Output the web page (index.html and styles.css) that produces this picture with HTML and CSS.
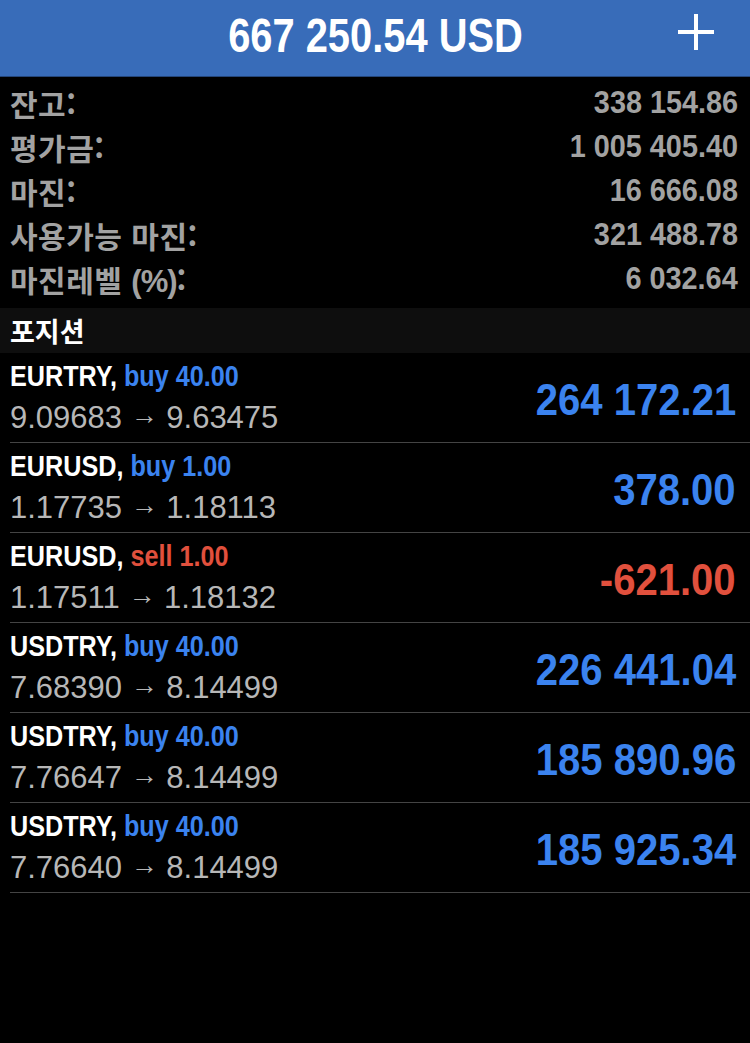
FILE: index.html
```html
<!DOCTYPE html>
<html lang="ko">
<head>
    <meta charset="UTF-8">
    <meta name="viewport" content="width=device-width, initial-scale=1.0">
    <title>거래</title>
    <link rel="stylesheet" href="styles.css">
</head>
<body>
    <header class="topbar">
        <h1 class="balance">667 250.54 USD</h1>
        <button class="add-btn" type="button" aria-label="추가">
            <svg width="36" height="36" viewBox="0 0 36 36">
                <rect x="16" y="0" width="4" height="36" fill="#fff"/>
                <rect x="0" y="16" width="36" height="4" fill="#fff"/>
            </svg>
        </button>
    </header>

    <section class="summary">
        <div class="summary-row"><span>잔고:</span><span class="num">338 154.86</span></div>
        <div class="summary-row"><span>평가금:</span><span class="num">1 005 405.40</span></div>
        <div class="summary-row"><span>마진:</span><span class="num">16 666.08</span></div>
        <div class="summary-row"><span>사용가능 마진:</span><span class="num">321 488.78</span></div>
        <div class="summary-row"><span>마진레벨 <span class="pct">(%)</span>:</span><span class="num">6 032.64</span></div>
    </section>

    <div class="section-title">포지션</div>

    <ul class="positions">
        <li class="position">
            <div class="info">
                <div class="deal">EURTRY, <span class="buy">buy 40.00</span></div>
                <div class="prices">9.09683 <span class="arrow">→</span> 9.63475</div>
            </div>
            <div class="profit buy">264 172.21</div>
        </li>
        <li class="position">
            <div class="info">
                <div class="deal">EURUSD, <span class="buy">buy 1.00</span></div>
                <div class="prices">1.17735 <span class="arrow">→</span> 1.18113</div>
            </div>
            <div class="profit buy">378.00</div>
        </li>
        <li class="position">
            <div class="info">
                <div class="deal">EURUSD, <span class="sell">sell 1.00</span></div>
                <div class="prices">1.17511 <span class="arrow">→</span> 1.18132</div>
            </div>
            <div class="profit sell">-621.00</div>
        </li>
        <li class="position">
            <div class="info">
                <div class="deal">USDTRY, <span class="buy">buy 40.00</span></div>
                <div class="prices">7.68390 <span class="arrow">→</span> 8.14499</div>
            </div>
            <div class="profit buy">226 441.04</div>
        </li>
        <li class="position">
            <div class="info">
                <div class="deal">USDTRY, <span class="buy">buy 40.00</span></div>
                <div class="prices">7.76647 <span class="arrow">→</span> 8.14499</div>
            </div>
            <div class="profit buy">185 890.96</div>
        </li>
        <li class="position">
            <div class="info">
                <div class="deal">USDTRY, <span class="buy">buy 40.00</span></div>
                <div class="prices">7.76640 <span class="arrow">→</span> 8.14499</div>
            </div>
            <div class="profit buy">185 925.34</div>
        </li>
    </ul>
</body>
</html>
```

FILE: styles.css
```css
/* no condensed face is installed, so bold numbers are squeezed with scaleX */
body {
    margin: 0;
    background-color: #000;
    color: #fff;
    font-family: "Liberation Sans", Arial, sans-serif;
}

.topbar {
    height: 76px;
    background-color: #386cb9;
    border-bottom: 1px solid #24467a;
    display: flex;
    align-items: center;
    justify-content: center;
    position: relative;
}

.balance {
    margin: 0 0 6px 0;
    font-size: 48px;
    font-weight: bold;
    color: #fff;
    transform: scaleX(0.83);
}

.add-btn {
    position: absolute;
    right: 36px;
    top: 14px;
    padding: 0;
    border: none;
    background: none;
    width: 36px;
    height: 36px;
    cursor: pointer;
}

.add-btn svg {
    display: block;
}

.summary {
    padding: 4px 12px 7px 10px;
}

.summary-row {
    display: flex;
    justify-content: space-between;
    align-items: center;
    height: 44px;
    color: #a2a2a2;
    font-family: "Noto Sans CJK KR", sans-serif;
    font-weight: bold;
    font-size: 30px;
    letter-spacing: 0.5px;
}

.pct {
    font-family: "Liberation Sans", Arial, sans-serif;
    font-size: 31px;
    letter-spacing: -1px;
}

.num {
    display: inline-block;
    font-family: "Liberation Sans", Arial, sans-serif;
    font-size: 31px;
    letter-spacing: 0;
    transform: scaleX(0.93);
    transform-origin: right center;
}

.section-title {
    height: 45px;
    padding-left: 10px;
    background-color: #0e0e0e;
    display: flex;
    align-items: center;
    font-family: "Noto Sans CJK KR", sans-serif;
    font-weight: bold;
    font-size: 27px;
}

.positions {
    list-style: none;
    margin: 0;
    padding: 0;
}

.position {
    height: 89px;
    margin-left: 10px;
    border-bottom: 1px solid #444;
    display: flex;
    align-items: center;
    justify-content: space-between;
    padding-right: 14px;
}

.deal {
    font-size: 30px;
    font-weight: bold;
    line-height: 38px;
    white-space: nowrap;
    transform: scaleX(0.84);
    transform-origin: left center;
}

.prices {
    font-size: 31px;
    color: #b7b7b7;
    line-height: 40px;
}

.arrow {
    font-size: 27px;
    vertical-align: 4px;
}

.profit {
    font-size: 45px;
    font-weight: bold;
    margin-top: 4px;
    transform: scaleX(0.89);
    transform-origin: right center;
}

.buy {
    color: #3b83ef;
}

.sell {
    color: #e1503d;
}
```
